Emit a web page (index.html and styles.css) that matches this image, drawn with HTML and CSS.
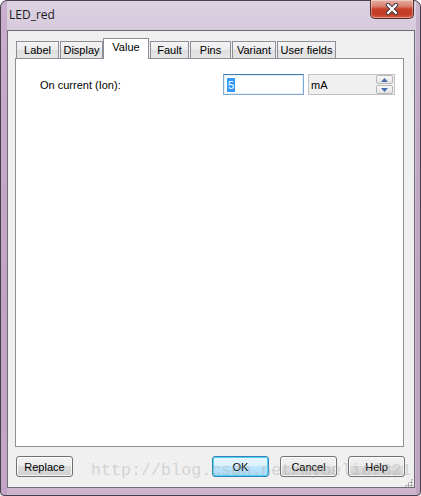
FILE: index.html
```html
<!DOCTYPE html>
<html>
<head>
<meta charset="utf-8">
<link rel="stylesheet" href="styles.css">
</head>
<body>
<div class="window">
  <div class="titlebar">
    <span class="title">LED_red</span>
    <div class="close">
      <svg width="20" height="12" viewBox="0 0 20 12">
        <path d="M6 2 L14 10 M14 2 L6 10" stroke="#3a3a4a" stroke-width="4.2" stroke-linecap="round" fill="none"/>
        <path d="M6 2 L14 10 M14 2 L6 10" stroke="#ffffff" stroke-width="2.4" stroke-linecap="round" fill="none"/>
      </svg>
    </div>
  </div>
  <div class="client">
    <div class="tabs">
      <div class="tab w43">Label</div>
      <div class="tab w43">Display</div>
      <div class="tab active">Value</div>
      <div class="tab w39">Fault</div>
      <div class="tab w41">Pins</div>
      <div class="tab w44">Variant</div>
      <div class="tab w59">User fields</div>
    </div>
    <div class="panel">
      <div class="row">
        <span class="label">On current (Ion):</span>
        <div class="input"><span class="sel">5</span></div>
        <div class="units">
          <span>mA</span>
          <div class="spin">
            <div class="spinbtn"><svg width="7" height="4" viewBox="0 0 7 4"><path d="M0 4 L3.5 0 L7 4 Z" fill="#4a6aa8"/></svg></div>
            <div class="spinbtn"><svg width="7" height="4" viewBox="0 0 7 4"><path d="M0 0 L3.5 4 L7 0 Z" fill="#4a6aa8"/></svg></div>
          </div>
        </div>
      </div>
    </div>
    <div class="buttons">
      <button class="btn">Replace</button>
      <div class="group">
        <button class="btn default">OK</button>
        <button class="btn">Cancel</button>
        <button class="btn">Help</button>
      </div>
    </div>
  </div>
  <div class="watermark">http://blog.csdn.net/mybelief321</div>
  <div class="grip"></div>
</div>
</body>
</html>
```
FILE: styles.css
```css
html, body {
  margin: 0;
  padding: 0;
  background: #ffffff;
}
body {
  width: 421px;
  height: 496px;
  overflow: hidden;
}
.window {
  position: relative;
  width: 421px;
  height: 496px;
  box-sizing: border-box;
  border: 1px solid #44404c;
  border-radius: 7px 7px 4px 4px;
  background:
    linear-gradient(90deg, rgba(190,150,190,0.55) 0, rgba(190,150,190,0.55) 6px, transparent 6px, transparent 415px, rgba(180,150,185,0.5) 415px),
    linear-gradient(180deg, #ddd2e2 0, #d6cadc 30px, #cfbfd4 120px, #c9b3ca 300px, #cdb6cd 496px);
  padding: 0 5px 7px 6px;
  display: flex;
  flex-direction: column;
  font-family: "Liberation Sans", Arial, sans-serif;
  font-size: 11px;
  color: #000;
}
.titlebar {
  height: 29px;
  display: flex;
  align-items: flex-start;
  justify-content: space-between;
  flex: none;
}
.title {
  font-family: "Open Sans", "Noto Sans", sans-serif;
  font-size: 12px;
  color: #1a1a1a;
  margin-top: 5px;
  margin-left: 2px;
}
.close {
  width: 44px;
  height: 19px;
  margin-top: -1px;
  margin-right: 1px;
  box-sizing: border-box;
  border: 1px solid #5a2a2a;
  border-top: none;
  border-radius: 0 0 5px 5px;
  background: linear-gradient(180deg, #e8b0a4 0, #d88070 35%, #c7402a 50%, #c43c24 80%, #d6604a 100%);
  display: flex;
  align-items: center;
  justify-content: center;
  box-shadow: inset 0 0 0 1px rgba(255,255,255,0.35);
}
.client {
  flex: 1;
  background: #f0f0f0;
  border: 1px solid #6e6c78;
  padding: 7px 10px 10px 7px;
  display: flex;
  flex-direction: column;
  min-height: 0;
}
.tabs {
  height: 20px;
  display: flex;
  align-items: flex-end;
  gap: 1px;
  margin-left: 1px;
  flex: none;
  position: relative;
  z-index: 2;
}
.tab {
  height: 17px;
  box-sizing: border-box;
  border: 1px solid #8d8f98;
  border-bottom: none;
  background: linear-gradient(180deg, #f4f4f4 0, #ebebeb 50%, #dedede 51%, #e6e6e6 100%);
  text-align: center;
  line-height: 16px;
  color: #000;
}
.w43 { width: 43px; }
.w39 { width: 39px; }
.w41 { width: 41px; }
.w44 { width: 44px; }
.w59 { width: 59px; }
.tab.active {
  width: 46px;
  height: 21px;
  margin-left: -1px;
  margin-bottom: -1px;
  background: #ffffff;
  line-height: 17px;
}
.panel {
  flex: 1;
  width: 389px;
  box-sizing: border-box;
  background: #ffffff;
  border: 1px solid #8d8f98;
  padding: 15px 0 0 24px;
  position: relative;
  z-index: 1;
}
.row {
  display: flex;
  align-items: center;
  height: 21px;
}
.label {
  width: 183px;
  flex: none;
}
.input {
  width: 81px;
  height: 21px;
  box-sizing: border-box;
  border: 1px solid #7fa9d0;
  border-top-color: #3d7bad;
  background: #fff;
  box-shadow: inset 0 0 0 1px #e4eff8;
  display: flex;
  align-items: center;
  padding-left: 3px;
  flex: none;
}
.sel {
  background: #3399ff;
  color: #fff;
  line-height: 14px;
  padding: 0 1px;
}
.units {
  width: 87px;
  height: 21px;
  box-sizing: border-box;
  margin-left: 4px;
  border: 1px solid #c3c3c3;
  background: #f0f0f0;
  display: flex;
  align-items: center;
  justify-content: space-between;
  padding-left: 2px;
  flex: none;
}
.spin {
  width: 17px;
  height: 19px;
  display: flex;
  flex-direction: column;
  gap: 1px;
  margin-right: 1px;
}
.spinbtn {
  flex: 1;
  box-sizing: border-box;
  border: 1px solid #b8b8b8;
  border-radius: 2px;
  background: linear-gradient(180deg, #f8f8f8, #e4e4e4);
  display: flex;
  align-items: center;
  justify-content: center;
}
.buttons {
  height: 21px;
  margin-top: 9px;
  display: flex;
  justify-content: space-between;
  margin-left: 1px;
  margin-right: -1px;
  flex: none;
}
.group {
  display: flex;
  gap: 11px;
}
.btn {
  width: 57px;
  height: 21px;
  box-sizing: border-box;
  border: 1px solid #707070;
  border-radius: 3px;
  background: linear-gradient(180deg, #f2f2f2 0, #ebebeb 48%, #dddddd 50%, #cfcfcf 100%);
  box-shadow: inset 0 0 0 1px rgba(255,255,255,0.8);
  font-family: "Liberation Sans", Arial, sans-serif;
  font-size: 11px;
  color: #000;
  padding: 0;
  margin: 0;
}
.btn.default {
  border-color: #3c7fb1;
  background: linear-gradient(180deg, #eaf6fd 0, #d9f0fc 48%, #bee6fd 50%, #a7d9f5 100%);
  box-shadow: inset 0 0 0 1px #48d5fa;
}
.watermark {
  position: absolute;
  left: 90px;
  top: 460px;
  font-family: "Liberation Mono", "Courier New", monospace;
  font-size: 16.7px;
  color: rgba(175,175,175,0.45);
  white-space: nowrap;
  pointer-events: none;
  z-index: 5;
}
.grip {
  position: absolute;
  right: 7px;
  bottom: 8px;
  width: 9px;
  height: 9px;
  background-image: radial-gradient(circle, #9a9a9a 0.9px, transparent 1.2px);
  background-size: 3px 3px;
  clip-path: polygon(100% 0, 100% 100%, 0 100%);
  z-index: 6;
}
```
